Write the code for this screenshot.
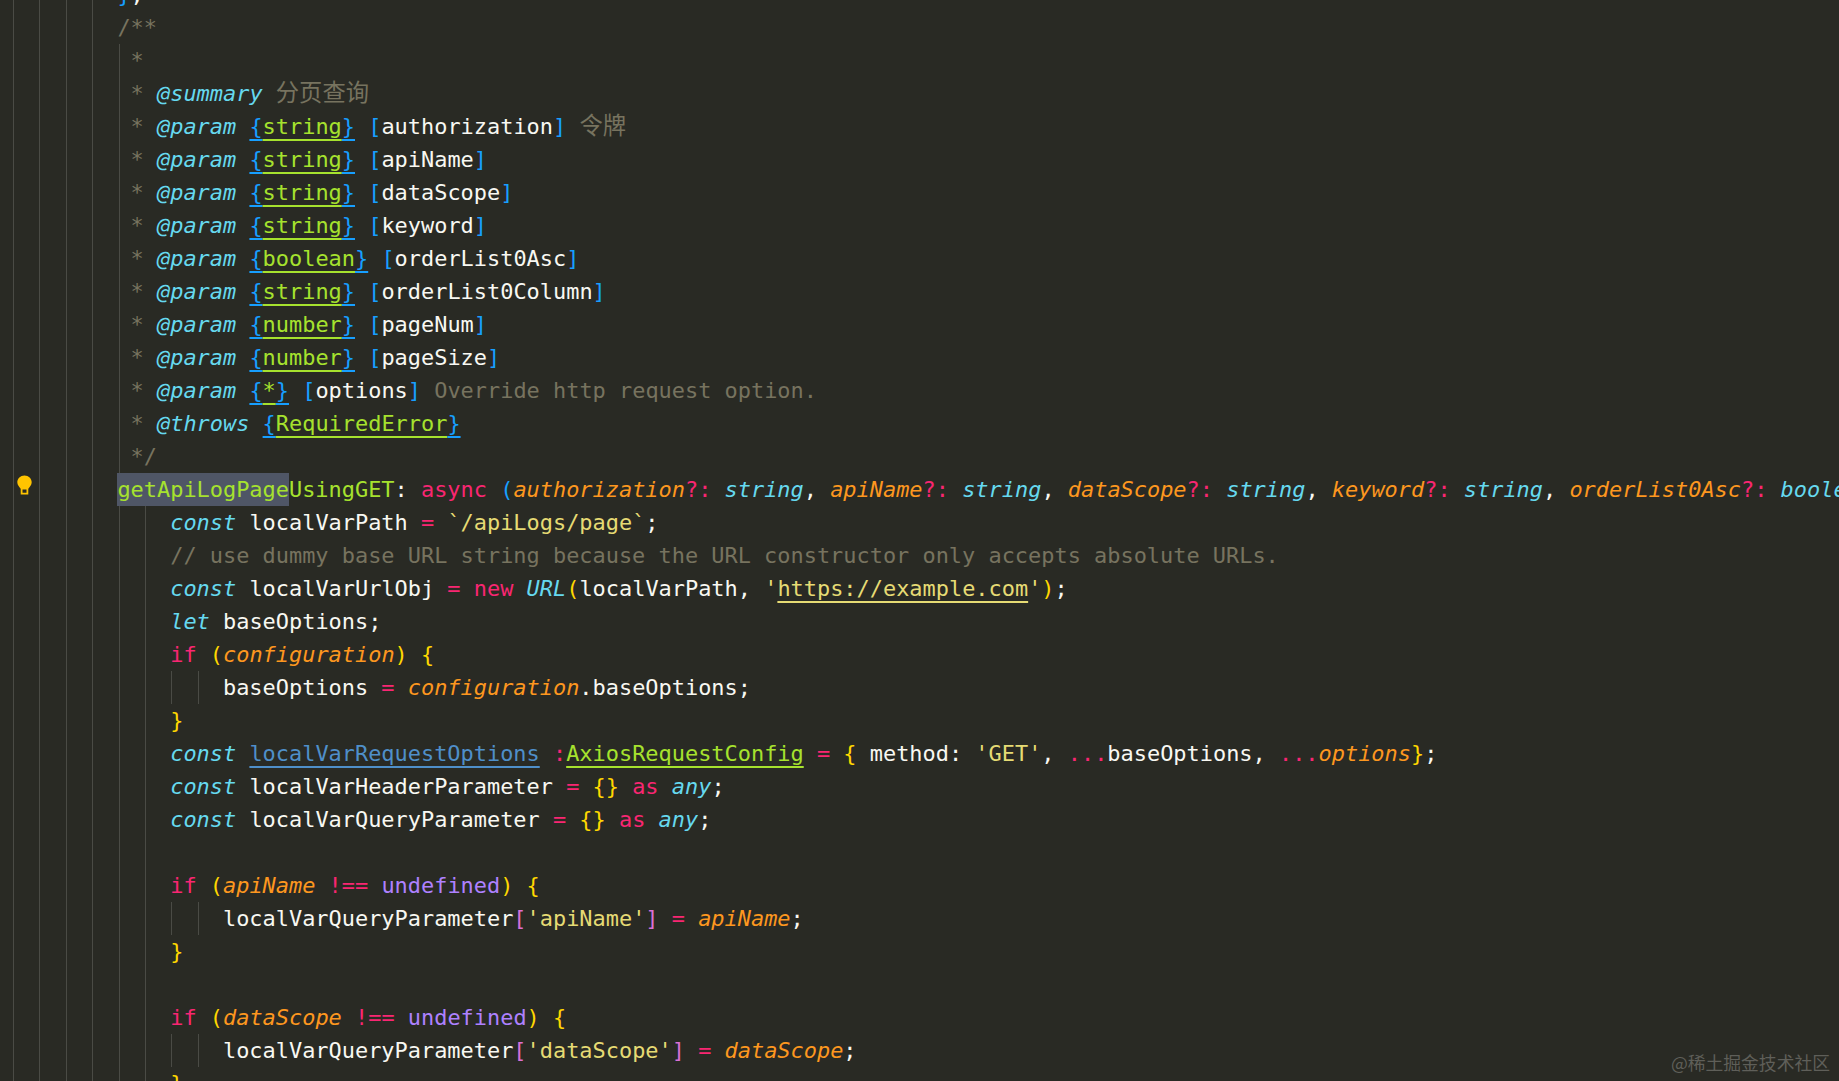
const plain = "text-[#f8f8f2]";
const com = "text-[#77735f]";
const cjk = "text-[#77735f] font-['Noto_Sans_CJK_SC',sans-serif] text-[23.3px] leading-none";
const kw = "text-[#f92672]";
const store = "text-[#66d9ef] italic";
const arg = "text-[#fd971f] italic";
const fn = "text-[#a6e22e]";
const str = "text-[#e6db74]";
const num = "text-[#ae81ff]";
const blue = "text-[#179fff]";
const gold = "text-[#ffd700]";
const orchid = "text-[#da70d6]";
const linkBlue = "text-[#179fff] underline decoration-2 underline-offset-[5px] decoration-[#179fff] [text-decoration-skip-ink:none]";
const linkGreen = "text-[#a6e22e] underline decoration-2 underline-offset-[5px] decoration-[#a6e22e] [text-decoration-skip-ink:none]";
const linkStr = "text-[#e6db74] underline decoration-2 underline-offset-[5px] decoration-[#e6db74] [text-decoration-skip-ink:none]";
const linkVar = "text-[#4f8fc9] underline decoration-2 underline-offset-[5px] decoration-[#4f8fc9] [text-decoration-skip-ink:none]";
const hl = "inline-block h-[33px] bg-[#4f5666] text-[#a6e22e] relative";

type Seg = [string, string];
type Row = { guides: number; segs: Seg[] };

const param = (type: string, name: string, rest: Seg[] = []): Row => ({
  guides: 5,
  segs: [
    [" * ", com],
    ["@param", store],
    [" ", plain],
    ["{", linkBlue],
    [type, linkGreen],
    ["}", linkBlue],
    [" ", plain],
    ["[", blue],
    [name, plain],
    ["]", blue],
    ...rest,
  ],
});

const queryCheck = (name: string): Row[] => [
  {
    guides: 6,
    segs: [
      ["    ", plain],
      ["if", kw],
      [" ", plain],
      ["(", gold],
      [name, arg],
      [" ", plain],
      ["!==", kw],
      [" ", plain],
      ["undefined", num],
      [")", gold],
      [" ", plain],
      ["{", gold],
    ],
  },
  {
    guides: 8,
    segs: [
      ["        localVarQueryParameter", plain],
      ["[", orchid],
      [`'${name}'`, str],
      ["]", orchid],
      [" ", plain],
      ["=", kw],
      [" ", plain],
      [name, arg],
      [";", plain],
    ],
  },
  { guides: 6, segs: [["    ", plain], ["}", gold]] },
];

const rows: Row[] = [
  { guides: 4, segs: [["}", blue], [";", plain]] },
  { guides: 4, segs: [["/**", com]] },
  { guides: 5, segs: [[" *", com]] },
  { guides: 5, segs: [[" * ", com], ["@summary", store], [" ", plain], ["分页查询", cjk]] },
  param("string", "authorization", [[" ", plain], ["令牌", cjk]]),
  param("string", "apiName"),
  param("string", "dataScope"),
  param("string", "keyword"),
  param("boolean", "orderList0Asc"),
  param("string", "orderList0Column"),
  param("number", "pageNum"),
  param("number", "pageSize"),
  param("*", "options", [[" Override http request option.", com]]),
  {
    guides: 5,
    segs: [
      [" * ", com],
      ["@throws", store],
      [" ", plain],
      ["{", linkBlue],
      ["RequiredError", linkGreen],
      ["}", linkBlue],
    ],
  },
  { guides: 5, segs: [[" */", com]] },
  {
    guides: 5,
    segs: [
      ["getApiLogPage", hl],
      ["UsingGET", fn],
      [": ", plain],
      ["async", kw],
      [" ", plain],
      ["(", blue],
      ["authorization", arg],
      ["?:", kw],
      [" ", plain],
      ["string", store],
      [", ", plain],
      ["apiName", arg],
      ["?:", kw],
      [" ", plain],
      ["string", store],
      [", ", plain],
      ["dataScope", arg],
      ["?:", kw],
      [" ", plain],
      ["string", store],
      [", ", plain],
      ["keyword", arg],
      ["?:", kw],
      [" ", plain],
      ["string", store],
      [", ", plain],
      ["orderList0Asc", arg],
      ["?:", kw],
      [" ", plain],
      ["boolean", store],
    ],
  },
  {
    guides: 6,
    segs: [
      ["    ", plain],
      ["const", store],
      [" localVarPath ", plain],
      ["=", kw],
      [" ", plain],
      ["`/apiLogs/page`", str],
      [";", plain],
    ],
  },
  { guides: 6, segs: [["    // use dummy base URL string because the URL constructor only accepts absolute URLs.", com]] },
  {
    guides: 6,
    segs: [
      ["    ", plain],
      ["const", store],
      [" localVarUrlObj ", plain],
      ["=", kw],
      [" ", plain],
      ["new", kw],
      [" ", plain],
      ["URL", store],
      ["(", gold],
      ["localVarPath, ", plain],
      ["'", str],
      ["https://example.com", linkStr],
      ["'", str],
      [")", gold],
      [";", plain],
    ],
  },
  { guides: 6, segs: [["    ", plain], ["let", store], [" baseOptions;", plain]] },
  {
    guides: 6,
    segs: [
      ["    ", plain],
      ["if", kw],
      [" ", plain],
      ["(", gold],
      ["configuration", arg],
      [")", gold],
      [" ", plain],
      ["{", gold],
    ],
  },
  {
    guides: 8,
    segs: [
      ["        baseOptions ", plain],
      ["=", kw],
      [" ", plain],
      ["configuration", arg],
      [".baseOptions;", plain],
    ],
  },
  { guides: 6, segs: [["    ", plain], ["}", gold]] },
  {
    guides: 6,
    segs: [
      ["    ", plain],
      ["const", store],
      [" ", plain],
      ["localVarRequestOptions", linkVar],
      [" ", plain],
      [":", kw],
      ["AxiosRequestConfig", linkGreen],
      [" ", plain],
      ["=", kw],
      [" ", plain],
      ["{", gold],
      [" method: ", plain],
      ["'GET'", str],
      [", ", plain],
      ["...", kw],
      ["baseOptions, ", plain],
      ["...", kw],
      ["options", arg],
      ["}", gold],
      [";", plain],
    ],
  },
  {
    guides: 6,
    segs: [
      ["    ", plain],
      ["const", store],
      [" localVarHeaderParameter ", plain],
      ["=", kw],
      [" ", plain],
      ["{}", gold],
      [" ", plain],
      ["as", kw],
      [" ", plain],
      ["any", store],
      [";", plain],
    ],
  },
  {
    guides: 6,
    segs: [
      ["    ", plain],
      ["const", store],
      [" localVarQueryParameter ", plain],
      ["=", kw],
      [" ", plain],
      ["{}", gold],
      [" ", plain],
      ["as", kw],
      [" ", plain],
      ["any", store],
      [";", plain],
    ],
  },
  { guides: 6, segs: [] },
  ...queryCheck("apiName"),
  { guides: 6, segs: [] },
  ...queryCheck("dataScope"),
];

function Bulb() {
  return (
    <svg
      className="absolute left-[17px] top-[2px]"
      width="15"
      height="20"
      viewBox="0 0 15 20"
    >
      <path
        d="M7.5 0.5C3.4 0.5 0.3 3.5 0.3 7.3c0 2.9 2 4.4 3.2 6.2h8c1.2-1.8 3.2-3.3 3.2-6.2C14.7 3.5 11.6 0.5 7.5 0.5z"
        fill="#ffc400"
      />
      <path d="M4.6 13.5h5.8v5.2H4.6z" fill="none" stroke="#ffc400" strokeWidth="1.8" />
    </svg>
  );
}

export default function App() {
  return (
    <div className="relative h-screen overflow-hidden bg-[#292a24] font-['DejaVu_Sans_Mono',monospace] text-[21.93px] leading-[33px]">
      <div className="-mt-[22px]">
        {rows.map((row, i) => (
          <div key={i} className="relative h-[33px] whitespace-pre pl-[117.4px]">
            {[...Array(row.guides)].map((_, g) => (
              <span
                key={g}
                className="absolute top-0 bottom-0 w-px bg-[#4a4b45]"
                style={{ left: 13 + g * 26.4 }}
              />
            ))}
            {i === 15 && <Bulb />}
            {row.segs.map(([text, cls], s) => (
              <span key={s} className={`relative ${cls}`}>
                {text}
              </span>
            ))}
          </div>
        ))}
      </div>
      <div className="absolute bottom-[9px] right-[9px] font-['Noto_Sans_CJK_SC',sans-serif] text-[17.8px] leading-[20px] text-[#5f5f59]">
        @稀土掘金技术社区
      </div>
    </div>
  );
}
